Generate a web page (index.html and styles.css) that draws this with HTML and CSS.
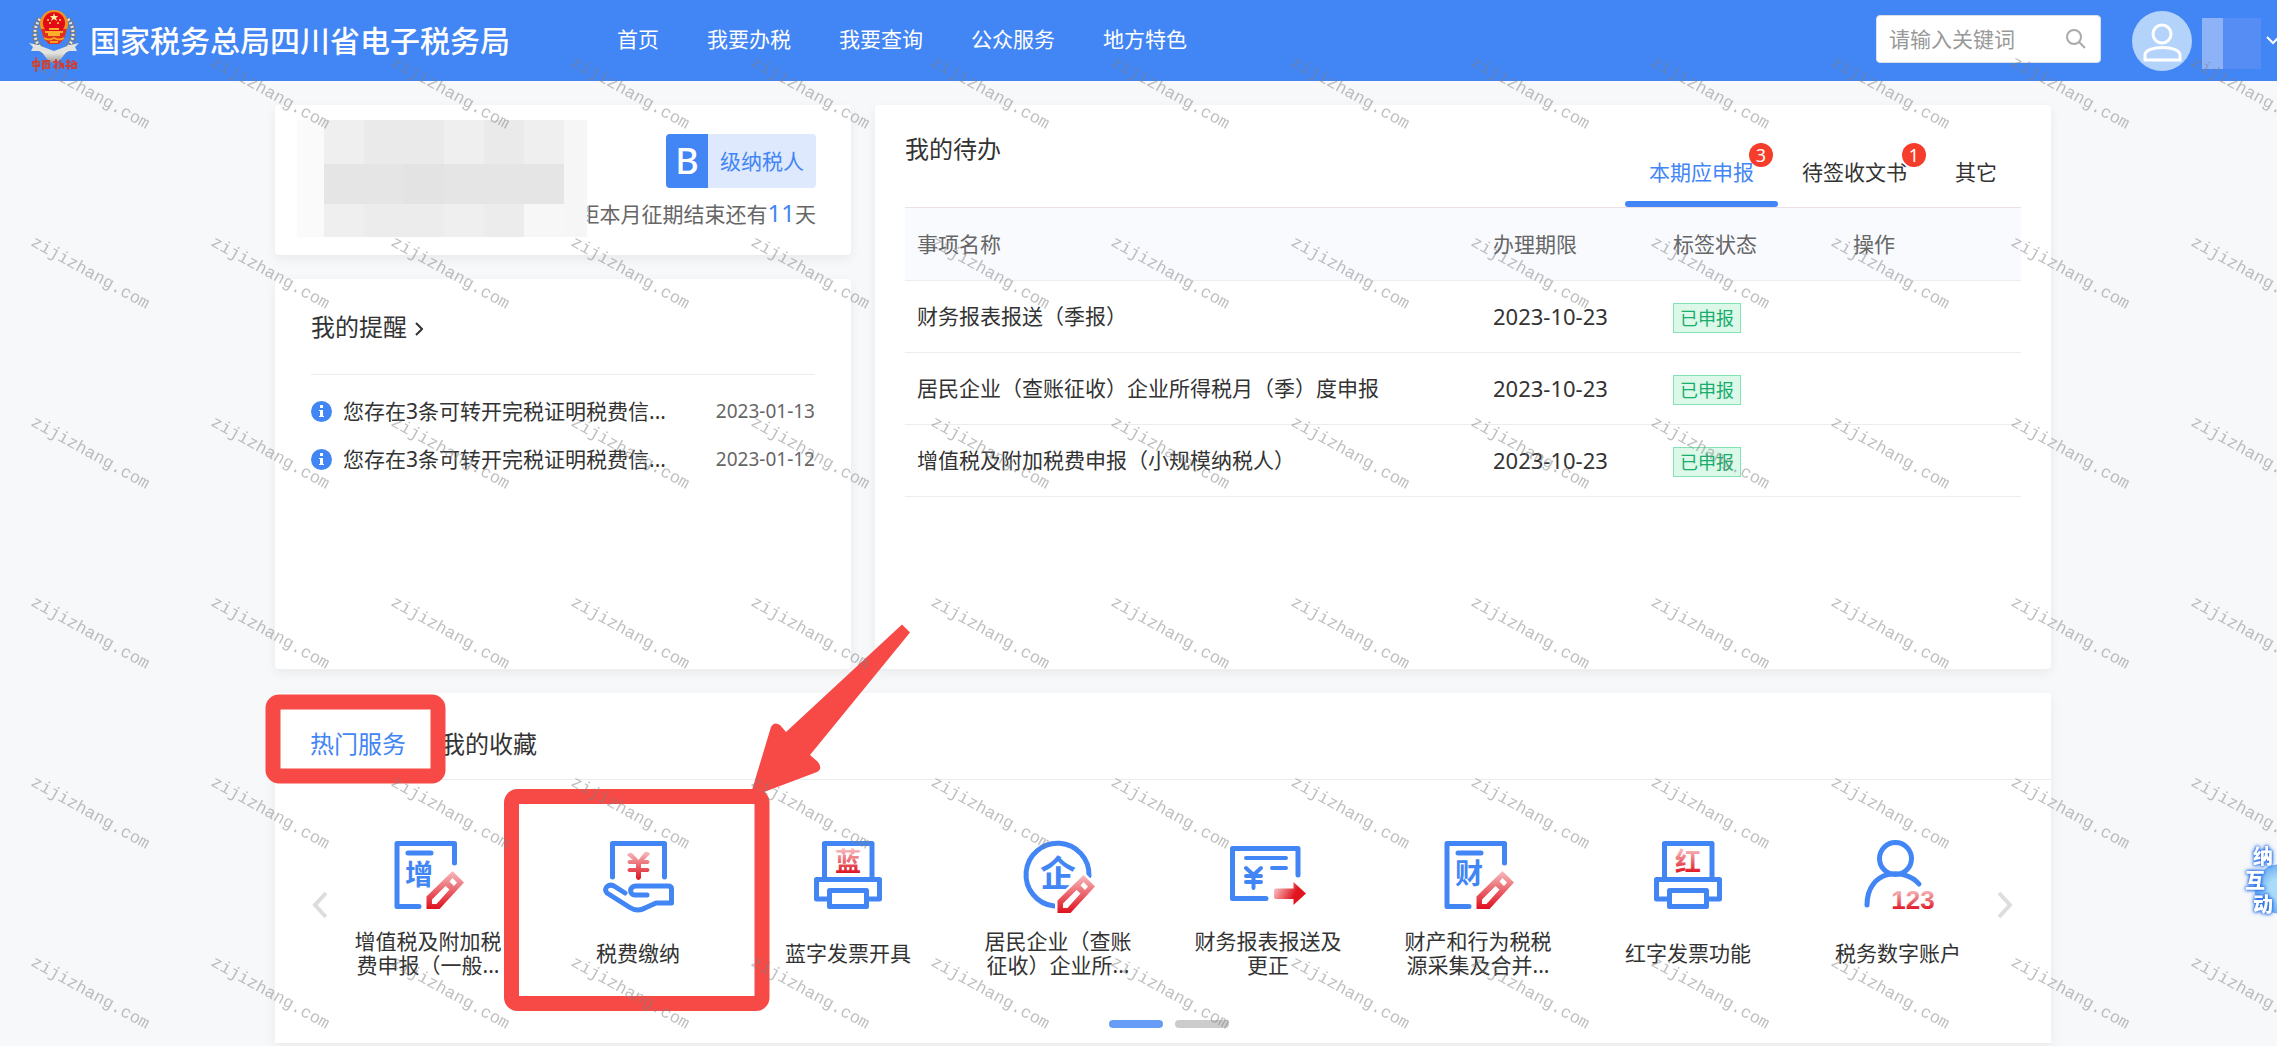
FILE: index.html
```html
<!DOCTYPE html>
<html lang="zh-CN">
<head>
<meta charset="utf-8">
<title>国家税务总局四川省电子税务局</title>
<link rel="stylesheet" href="styles.css">
</head>
<body>
<svg class="defs" width="0" height="0" aria-hidden="true">
  <defs>
    <linearGradient id="red" x1="0" y1="0" x2="0" y2="1">
      <stop offset="0" stop-color="#f6bcbe"/><stop offset="1" stop-color="#df101d"/>
    </linearGradient>
    <linearGradient id="redText" x1="0" y1="0.2" x2="0" y2="0.85">
      <stop offset="0" stop-color="#f6b4b7"/><stop offset="1" stop-color="#df101d"/>
    </linearGradient>
    <linearGradient id="redArrow" x1="0" y1="0" x2="1" y2="0.4">
      <stop offset="0" stop-color="#fbdcdc"/><stop offset="0.75" stop-color="#e0151f"/>
    </linearGradient>
    <linearGradient id="silver" x1="0" y1="0" x2="0" y2="1">
      <stop offset="0" stop-color="#f4f4f2"/><stop offset="1" stop-color="#8b8b88"/>
    </linearGradient>
    <symbol id="pencil" viewBox="0 0 76 76" overflow="visible">
      <path d="M60.500 32L72 43.500L47.500 70H34.500V57.500Z" fill="#fff" stroke="#fff" stroke-width="5"/>
      <path fill="url(#red)" fill-rule="evenodd" d="M60.500 32L72 43.500L47.500 70H34.500V57.500ZM53.500 47L40 60.500V65H44.500L57.500 50.500ZM60.500 39L57.500 42.500L62 47L65 43.500Z"/>
    </symbol>
    <symbol id="printer" viewBox="0 0 72 72">
      <path d="M12.500 38V4.500H60V38M17 60H4.500V40.500H67.500V60H55M17.500 51.500H54.500V67.500H17.500Z"/>
    </symbol>
  </defs>
</svg>

<header class="topbar">
  <svg class="emblem" viewBox="0 0 50 64" aria-hidden="true">
    <g fill="none" stroke="#77797a" stroke-width="6" stroke-dasharray="3 1"><path d="M11 10C2 22 5 37 20 46"/><path d="M39 10C48 22 45 37 30 46"/></g>
    <g fill="none" stroke="#e8e8e4" stroke-width="3" stroke-dasharray="2 2"><path d="M11 10C2 22 5 37 20 46"/><path d="M39 10C48 22 45 37 30 46"/></g>
    <path d="M0 34L9 36L25 42L41 36L50 34L46 38L48 42L40 42L25 50L10 42L2 42L4 38Z" fill="#e2e2de"/>
    <path d="M12 42Q25 48 38 42L32 50L25 55L18 50Z" fill="url(#silver)"/>
    <circle cx="25" cy="15" r="14" fill="#f39220"/>
    <path d="M12 20L15 30L20 35H30L35 30L38 20Z" fill="#e3301b"/>
    <circle cx="25" cy="14" r="11" fill="#e30b17"/>
    <path d="M16 22H34V24H31V27H19V24H16ZM20 19H30V21H20Z" fill="#fbb02a"/>
    <path d="M25 4l1 3h3l-2 2 1 3-3-2-3 2 1-3-2-2h3Z" fill="#fff0a0"/>
    <g fill="#ffe14a"><circle cx="19" cy="11" r="1"/><circle cx="31" cy="11" r="1"/><circle cx="21" cy="14" r="1"/><circle cx="29" cy="14" r="1"/></g>
    <path d="M15 29Q20 32 25 29Q30 32 35 29M21 33H29" fill="none" stroke="#f7a325" stroke-width="2"/>
    <g fill="none" stroke="#cf3f36" stroke-width="2" stroke-linecap="round"><path d="M4 53H10V57H4ZM7 49V62M14 53V60M14 52H20V59M16 55H18M17 53V59M16 59H19M25 53H28M27 51V60M25 58L28 55M31 52V55H34V59M30 59L33 56M38 53H41M39 51V60M37 57H41M44 52L47 54M43 55H47V59H43Z"/></g>
  </svg>
  <h1 class="site-name">国家税务总局四川省电子税务局</h1>
  <nav class="main-nav" aria-label="主导航">
    <a href="#">首页</a><a href="#">我要办税</a><a href="#">我要查询</a><a href="#">公众服务</a><a href="#">地方特色</a>
  </nav>
  <form class="search" role="search">
    <input class="search-input" type="text" placeholder="请输入关键词" aria-label="请输入关键词">
    <button class="search-button" type="button" aria-label="搜索">
      <svg width="20" height="20" viewBox="0 0 20 20"><circle cx="8" cy="8" r="7"/><path d="M13 13L19 19"/></svg>
    </button>
  </form>
  <span class="avatar" aria-hidden="true">
    <svg width="60" height="60" viewBox="0 0 60 60"><circle cx="30" cy="23" r="9"/><path d="M13 49V44C13 34 48 34 48 44V49Z"/></svg>
  </span>
  <span class="user-mask"></span>
  <svg class="user-caret" width="11" height="10" viewBox="0 0 11 10" aria-hidden="true"><path d="M1 1L7 7L13 1"/></svg>
</header>

<main class="page">
  <div class="overview">
    <div class="side-column">
      <section class="card taxpayer">
        <div class="mosaic" aria-hidden="true">
          <i></i><i></i><i></i><i></i><i></i><i></i><i></i><i></i>
          <i></i><i class="d3"></i><i class="d3"></i><i class="d4"></i><i class="d3"></i><i class="d3"></i><i class="d3"></i><i></i>
          <i></i><i class="d1"></i><i class="d2"></i><i class="d2"></i><i class="d1"></i><i class="d2"></i><i></i><i></i>
        </div>
        <div class="grade"><b class="grade-letter">B</b><span class="grade-text">级纳税人</span></div>
        <p class="days-left">距本月征期结束还有<strong>11</strong>天</p>
      </section>
      <section class="card reminders">
        <h2 class="card-title"><a href="#">我的提醒<svg width="8" height="14" viewBox="0 0 8 14" aria-hidden="true"><path d="M1 1L7 7L1 13"/></svg></a></h2>
        <ul class="reminder-list">
          <li><svg class="info" width="21" height="21" viewBox="0 0 21 21" aria-hidden="true"><circle cx="10.500" cy="10.500" r="10.500"/><path d="M9 4H12V7H9ZM8 9H12V15H13V16H8V15H9V10H8Z"/></svg><a href="#">您存在3条可转开完税证明税费信...</a><time>2023-01-13</time></li>
          <li><svg class="info" width="21" height="21" viewBox="0 0 21 21" aria-hidden="true"><circle cx="10.500" cy="10.500" r="10.500"/><path d="M9 4H12V7H9ZM8 9H12V15H13V16H8V15H9V10H8Z"/></svg><a href="#">您存在3条可转开完税证明税费信...</a><time>2023-01-12</time></li>
        </ul>
      </section>
    </div>

    <section class="card todo">
      <div class="todo-head">
        <h2 class="card-title">我的待办</h2>
        <div class="todo-tabs" role="tablist">
          <button class="todo-tab active" type="button" role="tab" aria-selected="true">本期应申报<span class="count">3</span></button>
          <button class="todo-tab" type="button" role="tab">待签收文书<span class="count">1</span></button>
          <button class="todo-tab" type="button" role="tab">其它</button>
        </div>
      </div>
      <table class="todo-table">
        <colgroup><col class="col-name"><col class="col-rest"><col class="col-rest"><col class="col-rest"></colgroup>
        <thead><tr><th>事项名称</th><th>办理期限</th><th>标签状态</th><th>操作</th></tr></thead>
        <tbody>
          <tr><td>财务报表报送（季报）</td><td class="date">2023-10-23</td><td class="status"><span class="tag">已申报</span></td><td></td></tr>
          <tr><td>居民企业（查账征收）企业所得税月（季）度申报</td><td class="date">2023-10-23</td><td class="status"><span class="tag">已申报</span></td><td></td></tr>
          <tr><td>增值税及附加税费申报（小规模纳税人）</td><td class="date">2023-10-23</td><td class="status"><span class="tag">已申报</span></td><td></td></tr>
        </tbody>
      </table>
    </section>
  </div>

  <section class="card services">
    <div class="service-tabs" role="tablist">
      <button class="service-tab active" type="button" role="tab" aria-selected="true">热门服务</button>
      <button class="service-tab" type="button" role="tab">我的收藏</button>
    </div>
    <div class="carousel">
      <button class="arrow" type="button" aria-label="上一页"><svg width="16" height="28" viewBox="0 0 16 28"><path d="M15 2L4 14L15 26"/></svg></button>
      <ul class="service-list">
        <li><a href="#">
          <svg class="icon" viewBox="0 0 72 72" aria-hidden="true"><path d="M62.500 24V4.500H5V67.500H27M16 14H39"/><text class="glyph" x="27" y="46" font-size="28">增</text><use href="#pencil" width="76" height="76"/></svg>
          <span class="label">增值税及附加税费申报（一般...</span></a></li>
        <li><a href="#">
          <svg class="icon" viewBox="0 0 72 72" aria-hidden="true"><path d="M10.500 38V4.500H62.500V38M23 54L12 47C6 44 1 50 5 54L27 68C33 72 38 72 43 69L54 64H69.500V50Q69.500 47 66 47H34C27 47 27 56 33 56H45"/><path class="solid" fill="url(#red)" d="M25 16Q28 12 31 15L36.500 21L42 14Q45 11 48 15L42 21H46Q49 23 46 25H39V29H46Q49 31 46 33H39V39Q36.500 43 34 39V33H27Q24 31 27 29H34V25H27Q24 23 27 21H31Z"/></svg>
          <span class="label">税费缴纳</span></a></li>
        <li><a href="#">
          <svg class="icon" viewBox="0 0 72 72" aria-hidden="true"><use href="#printer" width="72" height="72"/><text class="glyph red" x="36" y="32" font-size="26">蓝</text></svg>
          <span class="label">蓝字发票开具</span></a></li>
        <li><a href="#">
          <svg class="icon" viewBox="0 0 72 72" aria-hidden="true"><path d="M67 37A31.500 31.500 0 1 0 32 67"/><text class="glyph" x="36" y="48" font-size="36">企</text><use href="#pencil" x="1" y="4" width="76" height="76"/></svg>
          <span class="label">居民企业（查账征收）企业所...</span></a></li>
        <li><a href="#">
          <svg class="icon" viewBox="0 0 72 72" aria-hidden="true"><path d="M66 36V9.500H0.500V59.500H34"/><path class="thin" d="M14 19H54M40 29H54M14 29L21.500 36L29 29M14 37H29M14 43H29M21.500 36V49"/><path class="solid" d="M44 49.500H61.500V43L74 54.500L61.500 66V60H44Q42 60 42 58V51.500Q42 49.500 44 49.500Z" fill="url(#redArrow)"/></svg>
          <span class="label">财务报表报送及更正</span></a></li>
        <li><a href="#">
          <svg class="icon" viewBox="0 0 72 72" aria-hidden="true"><path d="M62.500 24V4.500H5V67.500H27M16 14H39"/><text class="glyph" x="27" y="45" font-size="28">财</text><use href="#pencil" width="76" height="76"/></svg>
          <span class="label">财产和行为税税源采集及合并...</span></a></li>
        <li><a href="#">
          <svg class="icon" viewBox="0 0 72 72" aria-hidden="true"><use href="#printer" width="72" height="72"/><text class="glyph red" x="36" y="32" font-size="26">红</text></svg>
          <span class="label">红字发票功能</span></a></li>
        <li><a href="#">
          <svg class="icon" viewBox="0 0 72 72" aria-hidden="true"><circle cx="33.500" cy="19.500" r="16"/><path d="M5 66C5 30 43 28 57 45"/><text class="digits red" x="51" y="70" font-size="26">123</text></svg>
          <span class="label">税务数字账户</span></a></li>
      </ul>
      <button class="arrow next" type="button" aria-label="下一页"><svg width="16" height="28" viewBox="0 0 16 28"><path d="M2 2L13 14L2 26"/></svg></button>
    </div>
    <div class="pager"><button class="current" type="button" aria-label="第1页"></button><button type="button" aria-label="第2页"></button></div>

    <svg class="callout" width="700" height="430" viewBox="0 0 700 430" aria-hidden="true">
      <rect x="23" y="102" width="165" height="74" rx="6"/>
      <rect x="261.500" y="196.500" width="250.500" height="207" rx="6"/>
      <path d="M652 24.500L660 32.500L560 155L568 162Q573 169 567 172L514 192L502 190L521 127Q524 121 530 125L536 132Z"/>
    </svg>
  </section>
</main>

<aside class="helper" aria-label="征纳互动">
  <span>纳</span><span class="out">互</span><span>动</span>
</aside>

<svg class="watermark" aria-hidden="true">
  <defs><pattern id="mark" width="180" height="180" patternUnits="userSpaceOnUse"><text transform="translate(30 65) rotate(29)">zijizhang.com</text></pattern></defs>
  <rect width="100%" height="100%" fill="url(#mark)"/>
</svg>
</body>
</html>
```
FILE: styles.css
```css
:root {
  --blue: #4285f4;
  --ink: #333;
  --muted: #666;
  --line: #ebedf0;
  --mark: #f74a46;
}

* { box-sizing: border-box; }

body {
  margin: 0;
  background: #f7f8fa;
  color: var(--ink);
  font: 21px/24px "Noto Sans", "Noto Sans CJK SC", sans-serif;
}

h1, h2, p, ul { margin: 0; padding: 0; font-weight: 400; }
ul { list-style: none; }
a { color: inherit; text-decoration: none; }
button { margin: 0; padding: 0; border: 0; background: none; color: inherit; font: inherit; }
.defs { position: absolute; }

/* Top bar */
.topbar {
  display: flex;
  align-items: center;
  height: 81px;
  padding-left: 29px;
  overflow: hidden;
  background: var(--blue);
  color: #fff;
}
.emblem { flex: none; width: 50px; height: 64px; margin-right: 11px; }
.site-name { flex: none; font-size: 30px; line-height: 36px; font-weight: 500; }
.main-nav { display: flex; flex: none; gap: 48px; margin: 0 0 4px 107px; }
.search {
  display: flex;
  align-items: center;
  flex: none;
  width: 225px;
  height: 48px;
  margin: 0 31px 4px auto;
  padding: 0 14px 0 12px;
  border: 1px solid #dcdfe6;
  border-radius: 4px;
  background: #fff;
}
.search-input {
  flex: 1;
  min-width: 0;
  padding: 0;
  border: 0;
  outline: 0;
  background: none;
  color: var(--ink);
  font: inherit;
}
.search-input::placeholder { color: #999; opacity: 1; }
.search-button { display: flex; }
.search-button svg { fill: none; stroke: #aaa; stroke-width: 2; }
.avatar {
  display: flex;
  flex: none;
  overflow: hidden;
  border-radius: 50%;
  background: #b4d3fb;
}
.avatar svg { fill: none; stroke: #fff; stroke-width: 3; }
.user-mask {
  flex: none;
  width: 59px;
  height: 51px;
  margin: 6px 5px 0 10px;
  background: linear-gradient(90deg, #8db2f8 21px, #568df5 21px);
}
.user-caret { flex: none; fill: none; stroke: #fff; stroke-width: 2; }

/* Page frame */
.page {
  display: flex;
  flex-direction: column;
  gap: 24px;
  padding: 24px 226px 3px 275px;
}
.card {
  position: relative;
  border-radius: 4px;
  background: #fff;
  box-shadow: 0 4px 12px rgba(0, 0, 0, 0.06);
}
.card-title { font-size: 24px; line-height: 36px; }
.overview { display: grid; grid-template-columns: 576fr 1176fr; gap: 24px; }
.side-column { display: flex; flex-direction: column; gap: 24px; }

/* Taxpayer summary */
.taxpayer {
  display: flex;
  flex-direction: column;
  align-items: flex-end;
  gap: 10px;
  min-height: 150px;
  padding: 29px 35px 0;
}
.grade { display: flex; height: 54px; overflow: hidden; border-radius: 4px; line-height: 54px; }
.grade-letter {
  width: 42px;
  background: var(--blue);
  color: #fff;
  font-size: 36px;
  font-weight: 500;
  text-align: center;
}
.grade-text { width: 108px; background: #dfe9fe; color: var(--blue); text-align: center; }
.days-left { color: var(--muted); line-height: 30px; }
.days-left strong { color: var(--blue); font-size: 24px; font-weight: 400; }
.mosaic {
  position: absolute;
  top: 15px;
  left: 22px;
  display: grid;
  grid-template-columns: 27px repeat(6, 40px) 23px;
  grid-template-rows: 44px 40px 33px;
  background: #ececec;
}
.mosaic i { background: #efefef; }
.mosaic i:nth-child(8n + 1) { background: #fafafa; }
.mosaic i:nth-child(8n) { background: #f6f6f6; }
.mosaic i:nth-child(3), .mosaic i:nth-child(4), .mosaic i:nth-child(6) { background: #eaeaea; }
.mosaic i:nth-child(23) { background: #f7f7f7; }
.mosaic .d1 { background: #efefef; }
.mosaic .d2 { background: #ececec; }
.mosaic .d3 { background: #e5e5e5; }
.mosaic .d4 { background: #e3e3e3; }

/* Reminders */
.reminders { flex: 1; min-height: 390px; padding: 30px 36px 0; }
.reminders .card-title { padding-bottom: 29px; border-bottom: 1px solid var(--line); }
.reminders .card-title svg { margin-left: 8px; fill: none; stroke: var(--ink); stroke-width: 2; }
.reminder-list { padding-top: 12px; }
.reminder-list li { display: flex; align-items: center; height: 48px; }
.reminder-list a { flex: 1; margin-left: 11px; white-space: nowrap; }
.reminder-list time { color: var(--muted); font-size: 19px; }
.info { flex: none; fill: var(--blue); }
.info path { fill: #fff; }

/* To-do list */
.todo { padding: 0 30px; }
.todo-head { display: flex; justify-content: space-between; height: 103px; border-bottom: 1px solid #eddfe4; }
.todo-head .card-title { padding-top: 26px; }
.todo-tabs { display: flex; }
.todo-tab { position: relative; padding: 32px 24px 0; white-space: nowrap; }
.todo-tab.active { color: var(--blue); }
.todo-tab.active::after {
  content: "";
  position: absolute;
  right: 0;
  bottom: 0;
  left: 0;
  height: 6px;
  border-radius: 3px;
  background: var(--blue);
}
.count {
  position: absolute;
  top: 38px;
  right: 5px;
  width: 24px;
  height: 24px;
  border-radius: 50%;
  background: #f63c2a;
  color: #fff;
  font-size: 18px;
  text-align: center;
}
.todo-table { width: 100%; border-collapse: collapse; table-layout: fixed; }
.col-rest { width: 180px; }
.todo-table th, .todo-table td {
  height: 72px;
  padding: 0 12px;
  border-bottom: 1px solid var(--line);
  font-weight: 400;
  text-align: left;
  white-space: nowrap;
}
.todo-table th { background: #f9fafe; color: var(--muted); }
.todo-table .date { font-size: 22px; }
.todo-table .status { padding-top: 4px; }
.tag {
  display: inline-block;
  height: 30px;
  padding: 0 6px;
  border: 1px solid #83e2b5;
  background: #dcf8e9;
  color: #17ad6c;
  font-size: 18px;
  line-height: 28px;
}

/* Popular services */
.services { min-height: 350px; border-radius: 0; }
.service-tabs { display: flex; gap: 35px; height: 87px; padding: 16px 35px 0; border-bottom: 1px solid var(--line); font-size: 24px; }
.service-tab.active { color: var(--blue); }
.carousel { display: flex; padding: 59px 36px 0; }
.arrow { flex: none; width: 12px; height: 132px; }
.arrow svg { display: block; fill: none; stroke: #ddd; stroke-width: 4; }
.arrow.next svg { margin-left: -6px; }
.service-list { display: grid; flex: 1; grid-template-columns: repeat(8, 1fr); }
.service-list a { display: flex; flex-direction: column; align-items: center; gap: 18px; }
.icon {
  width: 72px;
  height: 72px;
  overflow: visible;
  fill: none;
  stroke: var(--blue);
  stroke-width: 5;
  stroke-linecap: round;
  stroke-linejoin: round;
}
.icon .thin { stroke-width: 4; }
.icon .solid { stroke: none; }
.icon use[href="#pencil"] { stroke: none; }
.glyph, .digits { fill: var(--blue); stroke: none; font-weight: 700; text-anchor: middle; }
.digits { font-family: "Liberation Sans", sans-serif; }
.glyph.red, .digits.red { fill: url(#redText); }
.label { display: flex; align-items: center; justify-content: center; width: 150px; height: 48px; text-align: center; }
.pager { display: flex; justify-content: center; margin-top: 43px; }
.pager button { width: 54px; height: 8px; margin-left: 12px; border-radius: 4px; background: #ccc; }
.pager .current { background: #679df6; }

/* Callout drawn over the services card */
.callout { position: absolute; top: -93px; left: -25px; pointer-events: none; }
.callout rect { fill: none; stroke: var(--mark); stroke-width: 15; stroke-linejoin: round; }
.callout path { fill: var(--mark); }

/* Floating helper on the window's edge */
.helper {
  position: fixed;
  top: 845px;
  right: 0;
  display: flex;
  flex-direction: column;
  align-items: flex-end;
  width: 36px;
  padding-right: 4px;
  background: radial-gradient(circle at 38px 44px, #a8dcfa 10px, #72b2f6 24px, transparent 25px);
  color: #fff;
  font-size: 20px;
  font-weight: 900;
  text-shadow: 0 0 3px #2c72e8, 0 0 3px #2c72e8, 0 0 5px #2c72e8;
}
.helper .out { margin-right: 8px; }

/* Repeating diagonal watermark */
.watermark { position: fixed; inset: 0; width: 100%; height: 100%; pointer-events: none; }
.watermark text { fill: rgba(128, 128, 128, 0.5); font: 17px "Liberation Mono", monospace; }
```
